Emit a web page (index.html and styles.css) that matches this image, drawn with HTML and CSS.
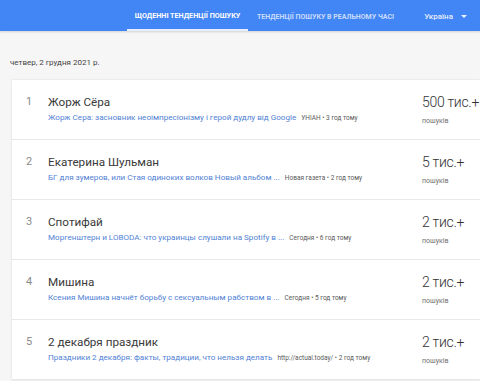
FILE: index.html
```html
<!DOCTYPE html>
<html lang="uk">
<head>
<meta charset="utf-8">
<link rel="stylesheet" href="styles.css">
</head>
<body>
<header class="topbar">
  <nav class="tabs">
    <div class="tab active">ЩОДЕННІ ТЕНДЕНЦІЇ ПОШУКУ</div>
    <div class="tab">ТЕНДЕНЦІЇ ПОШУКУ В РЕАЛЬНОМУ ЧАСІ</div>
  </nav>
  <div class="country">Україна <span class="caret"></span></div>
</header>
<main class="content">
  <div class="date">четвер, 2 грудня 2021 р.</div>
  <section class="card">
    <div class="row">
      <div class="num">1</div>
      <div class="main">
        <div class="title">Жорж Сёра</div>
        <div class="sub"><span class="link">Жорж Сера: засновник неоімпресіонізму і герой дудлу від Google</span><span class="src">УНІАН • 3 год тому</span></div>
      </div>
      <div class="count"><div class="big">500 тис.+</div><div class="small">пошуків</div></div>
    </div>
    <div class="row">
      <div class="num">2</div>
      <div class="main">
        <div class="title">Екатерина Шульман</div>
        <div class="sub"><span class="link">БГ для зумеров, или Стая одиноких волков Новый альбом ...</span><span class="src">Новая газета • 2 год тому</span></div>
      </div>
      <div class="count"><div class="big">5 тис.+</div><div class="small">пошуків</div></div>
    </div>
    <div class="row">
      <div class="num">3</div>
      <div class="main">
        <div class="title">Спотифай</div>
        <div class="sub"><span class="link">Моргенштерн и LOBODA: что украинцы слушали на Spotify в ...</span><span class="src">Сегодня • 6 год тому</span></div>
      </div>
      <div class="count"><div class="big">2 тис.+</div><div class="small">пошуків</div></div>
    </div>
    <div class="row">
      <div class="num">4</div>
      <div class="main">
        <div class="title">Мишина</div>
        <div class="sub"><span class="link">Ксения Мишина начнёт борьбу с сексуальным рабством в ...</span><span class="src">Сегодня • 5 год тому</span></div>
      </div>
      <div class="count"><div class="big">2 тис.+</div><div class="small">пошуків</div></div>
    </div>
    <div class="row">
      <div class="num">5</div>
      <div class="main">
        <div class="title">2 декабря праздник</div>
        <div class="sub"><span class="link">Праздники 2 декабря: факты, традиции, что нельзя делать</span><span class="src">http://actual.today/ • 2 год тому</span></div>
      </div>
      <div class="count"><div class="big">2 тис.+</div><div class="small">пошуків</div></div>
    </div>
  </section>
</main>
</body>
</html>
```
FILE: styles.css
```css
* { box-sizing: border-box; }
html, body { margin: 0; padding: 0; }
body {
  font-family: Roboto, "Noto Sans", Arial, sans-serif;
  background: #f6f6f6;
  width: 480px;
  height: 381px;
  overflow: hidden;
}
.topbar {
  height: 31px;
  background: #4285f4;
  display: flex;
  align-items: stretch;
  box-shadow: 0 1px 2px rgba(0,0,0,0.15);
}
.tabs {
  display: flex;
  margin-left: 127px;
}
.tab {
  display: flex;
  align-items: center;
  white-space: nowrap;
  font-size: 7px;
  font-weight: 700;
  color: rgba(255,255,255,0.72);
  padding: 2px 9px 0;
}
.tab.active {
  color: #fff;
  font-size: 7.2px;
  border-bottom: 2px solid #e8eefb;
  width: 121px;
  padding: 2px 0 0;
  justify-content: center;
}
.country {
  margin-left: auto;
  margin-right: 13px;
  display: flex;
  align-items: center;
  gap: 8px;
  color: rgba(255,255,255,0.9);
  font-size: 8px;
  font-weight: 500;
  padding-top: 2px;
  white-space: nowrap;
}
.caret {
  width: 0; height: 0;
  border-left: 3px solid transparent;
  border-right: 3px solid transparent;
  border-top: 3.5px solid rgba(255,255,255,0.9);
}
.content {
  padding: 27px 0 0 12px;
}
.date {
  font-size: 8px;
  color: #444;
  margin-left: -2px;
  height: 22px;
}
.card {
  background: #fff;
  box-shadow: 0 0 2px rgba(0,0,0,0.12);
}
.row {
  display: flex;
  height: 60px;
  border-bottom: 1px solid #e8e8e8;
}
.num {
  width: 36px;
  padding: 15px 0 0 14px;
  font-size: 11px;
  color: #8a8a8a;
}
.main {
  flex: 1;
  padding-top: 14px;
  min-width: 0;
}
.title {
  font-size: 11.7px;
  color: #3a3a3a;
  height: 18px;
  line-height: 16px;
}
.sub {
  display: flex;
  align-items: baseline;
  white-space: nowrap;
}
.link {
  font-size: 8.1px;
  color: #5282d4;
}
.src {
  font-size: 6.5px;
  color: #5a5a5a;
  margin-left: 5px;
}
.count {
  width: 58px;
  padding-top: 12px;
}
.big {
  font-size: 14px;
  font-weight: 300;
  letter-spacing: -0.3px;
  color: #333;
  height: 20px;
  line-height: 20px;
  white-space: nowrap;
}
.small {
  font-size: 7px;
  color: #707070;
  margin-top: 5px;
}
```
